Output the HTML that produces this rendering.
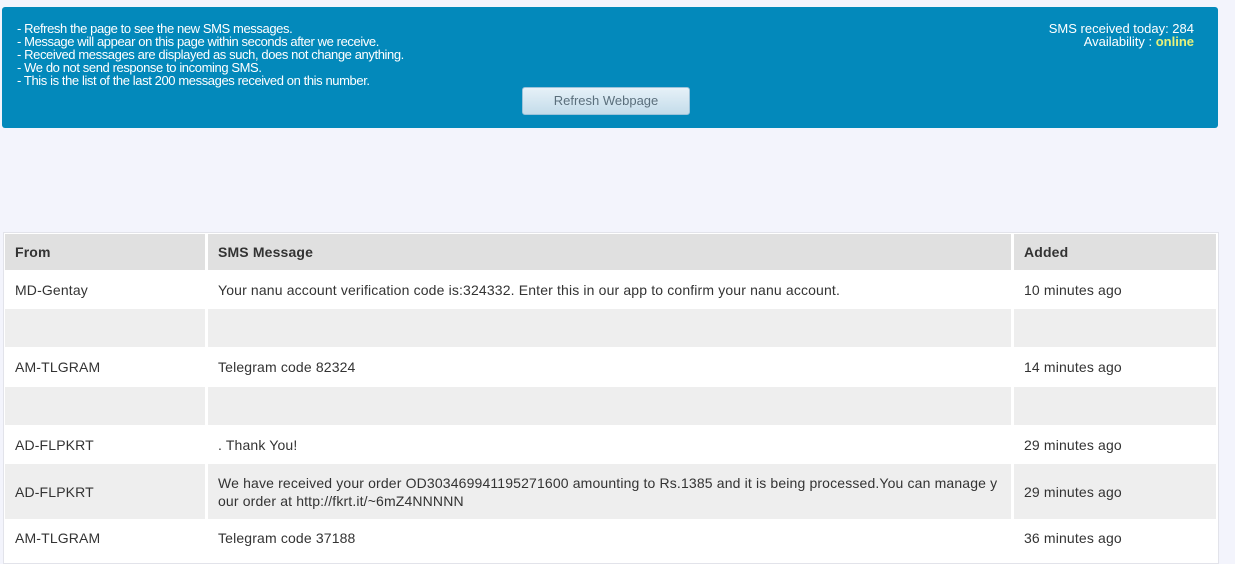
<!DOCTYPE html>
<html><head><meta charset="utf-8"><style>
html,body{margin:0;padding:0;width:1235px;height:555px;overflow:hidden;background:#f3f4fc;font-family:"Liberation Sans",Arial,sans-serif;}
.box{position:absolute;left:2px;top:7px;width:1216px;height:121px;background:#0389bb;border-radius:3px;color:#fff;font-size:13px;line-height:13px;}
.box .l{position:absolute;left:15px;top:15px;letter-spacing:-0.4px;}
.box .r{position:absolute;right:24px;top:15px;text-align:right;}
.on{color:#e8f27a;font-weight:bold;}
.btn{position:absolute;left:520px;top:80px;width:166px;height:26px;border-radius:3px;background:linear-gradient(#e6f1f8,#c4dcea);border:1px solid #9cc3da;color:#5b6f7c;font-size:13px;line-height:26px;text-align:center;}
.tw{position:absolute;left:3px;top:232px;width:1214px;height:330px;background:#fff;border:1px solid #e2e3ea;}
table{position:absolute;left:1px;top:1px;border-collapse:separate;border-spacing:0;font-size:14px;color:#333;letter-spacing:0.15px;}
td,th{padding:0 0 0 10px;text-align:left;border-right:3px solid #fff;vertical-align:middle;}
td:last-child,th:last-child{border-right:none;}
th{background:#e0e0e0;height:36px;border-bottom:1px solid #fff;}
tr.g td{background:#eeeeee;}
</style></head><body>
<div class="box">
<div class="l">- Refresh the page to see the new SMS messages.<br>- Message will appear on this page within seconds after we receive.<br>- Received messages are displayed as such, does not change anything.<br>- We do not send response to incoming SMS.<br>- This is the list of the last 200 messages received on this number.</div>
<div class="r">SMS received today: 284<br>Availability : <span class="on">online</span></div>
<div class="btn">Refresh Webpage</div>
</div>
<div class="tw">
<table>
<tr><th style="width:190px">From</th><th style="width:793px">SMS Message</th><th style="width:192px">Added</th></tr>
<tr style="height:38px"><td>MD-Gentay</td><td>Your nanu account verification code is:324332. Enter this in our app to confirm your nanu account.</td><td>10 minutes ago</td></tr>
<tr class="g" style="height:38px"><td></td><td></td><td></td></tr>
<tr style="height:40px"><td>AM-TLGRAM</td><td>Telegram code 82324</td><td>14 minutes ago</td></tr>
<tr class="g" style="height:38px"><td></td><td></td><td></td></tr>
<tr style="height:39px"><td>AD-FLPKRT</td><td>. Thank You!</td><td>29 minutes ago</td></tr>
<tr class="g" style="height:55px"><td>AD-FLPKRT</td><td style="line-height:18px">We have received your order OD303469941195271600 amounting to Rs.1385 and it is being processed.You can manage y<br>our order at http://fkrt.it/~6mZ4NNNNN</td><td>29 minutes ago</td></tr>
<tr style="height:38px"><td>AM-TLGRAM</td><td>Telegram code 37188</td><td>36 minutes ago</td></tr>
</table>
</div>
</body></html>
